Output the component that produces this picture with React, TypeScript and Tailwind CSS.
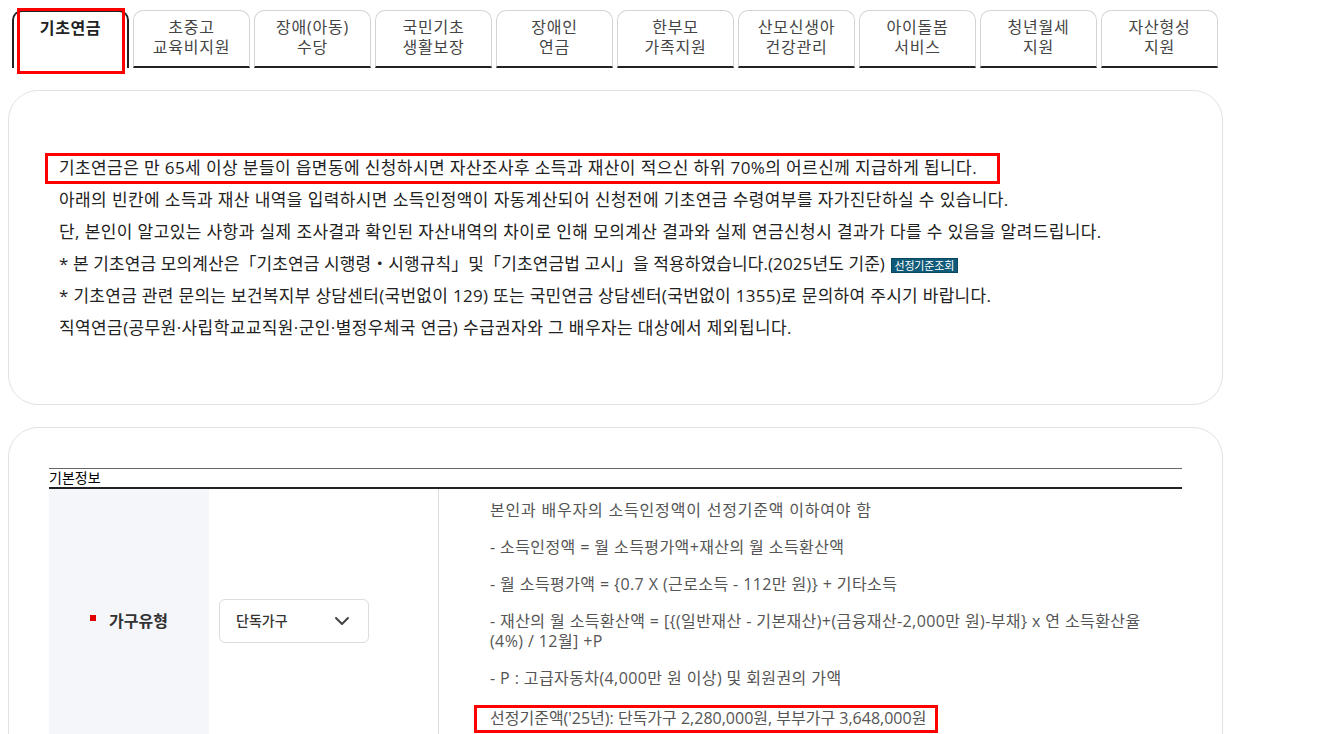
import { ChevronDown } from "lucide-react";

const tabs: string[][] = [
  ["기초연금"],
  ["초중고", "교육비지원"],
  ["장애(아동)", "수당"],
  ["국민기초", "생활보장"],
  ["장애인", "연금"],
  ["한부모", "가족지원"],
  ["산모신생아", "건강관리"],
  ["아이돌봄", "서비스"],
  ["청년월세", "지원"],
  ["자산형성", "지원"],
];

const TabBar = () => (
  <div className="flex gap-[4px] pl-[4px]">
    {tabs.map((lines, idx) =>
      idx === 0 ? (
        <div
          key={idx}
          className="relative w-[117px] h-[58px] border-2 border-b-0 border-[#222] rounded-t-[10px] flex justify-center pt-[6px] text-[16px] leading-[20px] tracking-[0.6px] font-bold text-[#222]"
        >
          {lines[0]}
          {/* annotation box */}
          <span className="absolute left-[3px] top-[-4px] w-[108px] h-[66px] border-[3px] border-[#ff0000]" />
        </div>
      ) : (
        <div
          key={idx}
          className="w-[117px] h-[58px] border border-b-2 border-[#d4d4d4] border-b-[#222] rounded-t-[10px] flex flex-col items-center pt-[6px] text-[16px] leading-[20px] tracking-[0.8px] text-[#444]"
        >
          {lines.map((l) => (
            <span key={l}>{l}</span>
          ))}
        </div>
      )
    )}
  </div>
);

const IntroCard = () => (
  <div className="mt-[22px] w-[1215px] border border-[#e2e2e2] rounded-[30px] px-[50px] pt-[61px] pb-[60px] text-[17px] leading-[32px] tracking-[0.4px] text-[#222]">
    <p className="relative">
      기초연금은 만 65세 이상 분들이 읍면동에 신청하시면 자산조사후 소득과 재산이 적으신 하위 70%의 어르신께 지급하게 됩니다.
      <span className="absolute left-[-14px] top-[1px] w-[955px] h-[31px] border-[3px] border-[#ff0000]" />
    </p>
    <p>아래의 빈칸에 소득과 재산 내역을 입력하시면 소득인정액이 자동계산되어 신청전에 기초연금 수령여부를 자가진단하실 수 있습니다.</p>
    <p>단, 본인이 알고있는 사항과 실제 조사결과 확인된 자산내역의 차이로 인해 모의계산 결과와 실제 연금신청시 결과가 다를 수 있음을 알려드립니다.</p>
    <p className="tracking-[0.1px]">
      * 본 기초연금 모의계산은「기초연금 시행령・시행규칙」및「기초연금법 고시」을 적용하였습니다.(2025년도 기준){" "}
      <span className="inline-block align-middle ml-[1px] px-[3px] bg-[#0f5a78] border border-[#0a4862] text-white text-[11px] leading-[13px] tracking-[-0.2px]">
        선정기준조회
      </span>
    </p>
    <p className="tracking-[0.3px]">* 기초연금 관련 문의는 보건복지부 상담센터(국번없이 129) 또는 국민연금 상담센터(국번없이 1355)로 문의하여 주시기 바랍니다.</p>
    <p>직역연금(공무원·사립학교교직원·군인·별정우체국 연금) 수급권자와 그 배우자는 대상에서 제외됩니다.</p>
  </div>
);

const InfoCard = () => (
  <div className="mt-[22px] w-[1215px] border border-[#e2e2e2] rounded-[30px] px-[40px] pt-[40px] pb-[40px]">
    <div className="border-t border-[#666] border-b-2 border-b-[#222] text-[14px] leading-[18px] text-black">
      기본정보
    </div>
    <div className="grid grid-cols-[160px_230px_1fr]">
      {/* label */}
      <div className="bg-[#f5f6fa] flex items-center justify-center gap-[13px]">
        <span className="w-[6px] h-[6px] bg-[#e00000] mb-[6px]" />
        <span className="text-[16px] font-semibold text-[#333]">가구유형</span>
      </div>
      {/* select */}
      <div className="border-r border-[#ddd] px-[10px] flex items-center">
        <div className="w-[150px] h-[44px] border border-[#ddd] rounded-[6px] flex items-center justify-between pl-[16px] pr-[14px] text-[14px] font-medium text-[#333]">
          단독가구
          <ChevronDown size={24} strokeWidth={2} className="text-[#444]" />
        </div>
      </div>
      {/* description */}
      <div className="pl-[51px] pr-[10px] pt-[11px] pb-[24px] text-[16px] leading-[20px] tracking-[0.4px] text-[#555] flex flex-col gap-[17px]">
        <p className="tracking-[0.8px]">본인과 배우자의 소득인정액이 선정기준액 이하여야 함</p>
        <p>- 소득인정액 = 월 소득평가액+재산의 월 소득환산액</p>
        <p>- 월 소득평가액 = {"{"}0.7 X (근로소득 - 112만 원){"}"} + 기타소득</p>
        <p className="whitespace-nowrap">
          - 재산의 월 소득환산액 = [{"{"}(일반재산 - 기본재산)+(금융재산-2,000만 원)-부채{"}"} x 연 소득환산율
          <br />
          (4%) / 12월] +P
        </p>
        <p>- P : 고급자동차(4,000만 원 이상) 및 회원권의 가액</p>
        <p className="relative mt-[3px] tracking-normal">
          선정기준액('25년): 단독가구 2,280,000원, 부부가구 3,648,000원
          <span className="absolute left-[-16px] top-[-3px] w-[464px] h-[28px] border-[3px] border-[#ff0000]" />
        </p>
      </div>
    </div>
  </div>
);

export default function App() {
  return (
    <div className="min-h-screen bg-white pl-[8px] pt-[10px] font-['Open_Sans','Noto_Sans_CJK_KR',sans-serif]">
      <TabBar />
      <IntroCard />
      <InfoCard />
    </div>
  );
}
